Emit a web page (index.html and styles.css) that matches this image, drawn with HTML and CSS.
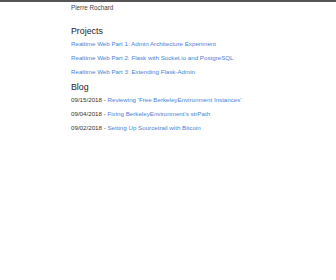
FILE: index.html
```html
<!DOCTYPE html>
<html>
<head>
<meta charset="utf-8">
<link rel="stylesheet" href="styles.css">
</head>
<body>
<div class="topbar"></div>
<main class="page">
  <header class="site-title">Pierre Rochard</header>
  <section class="section section-projects">
    <h2 class="heading">Projects</h2>
    <ul class="list">
      <li class="item"><a class="link" href="#">Realtime Web Part 1: Admin Architecture Experiment</a></li>
      <li class="item"><a class="link" href="#">Realtime Web Part 2: Flask with Socket.io and PostgreSQL</a></li>
      <li class="item"><a class="link" href="#">Realtime Web Part 3: Extending Flask-Admin</a></li>
    </ul>
  </section>
  <section class="section section-blog">
    <h2 class="heading">Blog</h2>
    <ul class="list">
      <li class="item">09/15/2018 - <a class="link" href="#">Reviewing 'Free BerkeleyEnvironment Instances'</a></li>
      <li class="item">09/04/2018 - <a class="link" href="#">Fixing BerkeleyEnvironment's strPath</a></li>
      <li class="item">09/02/2018 - <a class="link" href="#">Setting Up Sourcetrail with Bitcoin</a></li>
    </ul>
  </section>
</main>
</body>
</html>
```
FILE: styles.css
```css
html, body {
  margin: 0;
  padding: 0;
  background: #ffffff;
}
body {
  font-family: "Liberation Sans", Arial, sans-serif;
  color: #333333;
}
.topbar {
  height: 2px;
  background: #555555;
}
.page {
  padding-left: 71px;
}
.site-title {
  font-size: 6.3px;
  line-height: 8px;
  padding-top: 2px;
  color: #444444;
}
.section-projects {
  margin-top: 13.5px;
}
.section-blog {
  margin-top: 3.5px;
}
.heading {
  margin: 0;
  font-size: 8.8px;
  font-weight: normal;
  line-height: 10px;
  color: #222222;
}
.list {
  list-style: none;
  margin: 1.5px 0 0 0;
  padding: 0;
}
.item {
  font-size: 6.2px;
  line-height: 13.75px;
  color: #333333;
}
.link {
  color: #4a7fdb;
  text-decoration: none;
}
```
